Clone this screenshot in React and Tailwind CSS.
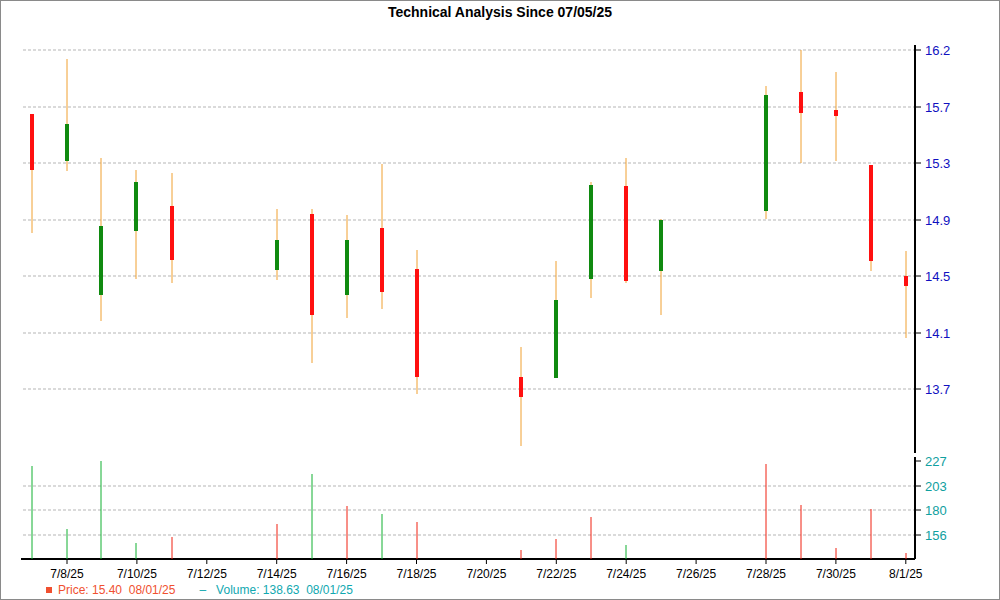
const candles = [
  [31, 113, 232, 113, 169, "r"],
  [66, 58, 170, 123, 160, "g"],
  [100, 157, 320, 225, 294, "g"],
  [135, 169, 278, 181, 230, "g"],
  [171, 172, 282, 205, 259, "r"],
  [276, 208, 279, 239, 269, "g"],
  [311, 208, 362, 213, 314, "r"],
  [346, 214, 317, 239, 294, "g"],
  [381, 163, 308, 227, 291, "r"],
  [416, 249, 393, 268, 376, "r"],
  [520, 346, 445, 376, 396, "r"],
  [555, 260, 377, 299, 377, "g"],
  [590, 181, 297, 184, 278, "g"],
  [625, 157, 282, 185, 280, "r"],
  [660, 218, 314, 219, 270, "g"],
  [765, 85, 218, 94, 210, "g"],
  [800, 49, 162, 91, 112, "r"],
  [835, 71, 160, 109, 115, "r"],
  [870, 164, 270, 164, 260, "r"],
  [905, 250, 337, 275, 285, "r"],
];

const volumes = [
  [31, 465, "g"], [66, 528, "g"], [100, 460, "g"], [135, 542, "g"], [171, 536, "r"],
  [276, 523, "r"], [311, 473, "g"], [346, 505, "r"], [381, 513, "g"], [416, 521, "r"],
  [520, 549, "r"], [555, 538, "r"], [590, 516, "r"], [625, 544, "g"], [765, 463, "r"],
  [800, 504, "r"], [835, 547, "r"], [870, 508, "r"], [905, 552, "r"],
];

const priceTicks = [[16.2, 49], [15.7, 106], [15.3, 162], [14.9, 219], [14.5, 275], [14.1, 332], [13.7, 388]];
const volTicks = [[227, 460], [203, 485], [180, 509], [156, 534]];
const dates = ["7/8/25", "7/10/25", "7/12/25", "7/14/25", "7/16/25", "7/18/25", "7/20/25", "7/22/25", "7/24/25", "7/26/25", "7/28/25", "7/30/25", "8/1/25"];

export default function App() {
  return (
    <div className="w-[1000px] h-[600px] bg-white border border-[#8a8a8a] relative" style={{ fontFamily: "'Liberation Sans', Arial, sans-serif" }}>
      <div className="text-center text-[14px] font-bold text-black pt-[1px]">Technical Analysis Since 07/05/25</div>

      <svg width="1000" height="600" className="absolute left-0 top-0" style={{ fontFamily: "'Liberation Sans', Arial, sans-serif" }}>
        {priceTicks.map(([v, y]) => (
          <g key={v}>
            <line x1="22" x2="914" y1={y} y2={y} stroke="#b5b5b5" strokeDasharray="3 2" />
            <line x1="914" x2="920" y1={y} y2={y} stroke="#000" />
            <text x="924" y={y + 5} fontSize="13" fill="#1010c0">{v.toFixed(1)}</text>
          </g>
        ))}
        {volTicks.map(([v, y]) => (
          <g key={v}>
            {v !== 227 && <line x1="22" x2="914" y1={y} y2={y} stroke="#b5b5b5" strokeDasharray="3 2" />}
            <line x1="914" x2="920" y1={y} y2={y} stroke="#000" />
            <text x="924" y={y + 5} fontSize="13" fill="#10a0a0">{v}</text>
          </g>
        ))}
        <line x1="914" x2="914" y1="44" y2="452" stroke="#000" strokeWidth="2" />
        <line x1="914" x2="914" y1="456" y2="558" stroke="#000" strokeWidth="2" />
        <line x1="20" x2="914" y1="558" y2="558" stroke="#000" strokeWidth="2" />

        {candles.map(([x, wt, wb, bt, bb, c]) => (
          <g key={x}>
            <line x1={x} x2={x} y1={wt} y2={wb} stroke="#f0a030" />
            <rect x={x - 2} y={bt} width="4" height={Math.max(bb - bt, 4)} fill={c === "r" ? "#ff1010" : "#108a10"} />
          </g>
        ))}

        {volumes.map(([x, y, c]) => (
          <line key={x} x1={x} x2={x} y1={y} y2={558} stroke={c === "r" ? "#f02010" : "#10b030"} />
        ))}

        {dates.map((d, i) => {
          const x = 66 + i * 69.9;
          return (
            <g key={d}>
              <line x1={x} x2={x} y1="558" y2="563" stroke="#000" />
              <text x={x} y="577" fontSize="12" textAnchor="middle" fill="#000">{d}</text>
            </g>
          );
        })}
      </svg>

      <div className="absolute left-[45px] top-[580px] flex items-center gap-[24px] text-[12px]">
        <div className="flex items-center gap-[6px] text-[#f05030]">
          <span className="w-[6px] h-[6px] bg-[#f05030] inline-block" />
          <span>Price: 15.40&nbsp; 08/01/25</span>
        </div>
        <div className="flex items-center gap-[10px] text-[#10a8b0]">
          <span>–</span>
          <span>Volume: 138.63&nbsp; 08/01/25</span>
        </div>
      </div>
    </div>
  );
}
